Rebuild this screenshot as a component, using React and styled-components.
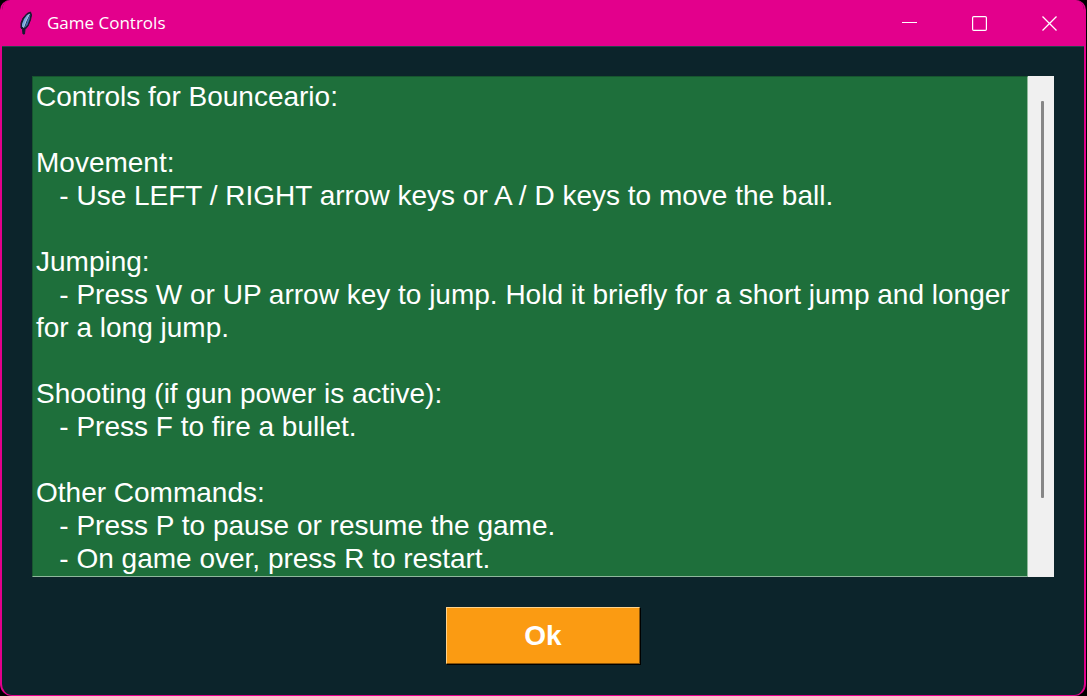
import React from "react";
import styled, { createGlobalStyle } from "styled-components";

const GlobalStyle = createGlobalStyle`
  *, *::before, *::after { box-sizing: border-box; }
  body { margin: 0; background: #000; }
`;

const Window = styled.div`
  display: flex;
  flex-direction: column;
  min-height: 100vh;
  margin-right: 1px;
  border: 2px solid #e3008c;
  border-top: 0;
  border-bottom-width: 1px;
  border-radius: 10px 10px 12px 12px;
  background: #0c242b;
  overflow: hidden;
`;

const TitleBar = styled.header`
  display: flex;
  align-items: center;
  height: 46px;
  padding-left: 16px;
  background: #e3008c;
  color: #fff;
`;

const Title = styled.h1`
  flex: 1;
  margin: 0 0 0 12px;
  font: 400 17px/24px "Open Sans", "Noto Sans", sans-serif;
`;

const WindowButton = styled.button`
  display: flex;
  align-items: center;
  justify-content: center;
  width: 70px;
  height: 46px;
  padding: 0;
  border: 0;
  background: transparent;
  color: inherit;
`;

const Body = styled.main`
  display: flex;
  flex: 1;
  flex-direction: column;
  align-items: center;
  gap: 30px;
  padding: 29px 30px 30px;
  border-top: 1px solid #25454a;
`;

const TextPanel = styled.div`
  display: flex;
  flex: 1;
  align-self: stretch;
  min-height: 200px;
`;

const ControlsText = styled.textarea`
  flex: 1;
  min-width: 0;
  padding: 3px 3px 0;
  border: 1px solid;
  border-color: #17552f #8fb89c #8fb89c #17552f;
  border-radius: 0;
  outline: 0;
  resize: none;
  scrollbar-width: none;
  background: #1e6f3b;
  color: #fff;
  font: 400 28px/33px "Liberation Sans", Arial, sans-serif;
`;

const ScrollTrack = styled.div`
  display: flex;
  justify-content: center;
  width: 26px;
  padding: 25px 0 25px 2px;
  background: #f0f0f0;
`;

const ScrollThumb = styled.div`
  width: 3px;
  height: 88%;
  border-radius: 1px;
  background: #868686;
`;

const OkButton = styled.button`
  width: 194px;
  height: 57px;
  margin-bottom: 1px;
  padding: 0;
  border: 1px solid;
  border-color: #ffd28c #8a5408 #8a5408 #ffd28c;
  border-radius: 0;
  box-shadow: 1px 1px 0 #000;
  background: #fb9b12;
  color: #fff;
  font: 700 28px/32px "Liberation Sans", Arial, sans-serif;
`;

const controls = `Controls for Bounceario:

Movement:
   - Use LEFT / RIGHT arrow keys or A / D keys to move the ball.

Jumping:
   - Press W or UP arrow key to jump. Hold it briefly for a short jump and longer for a long jump.

Shooting (if gun power is active):
   - Press F to fire a bullet.

Other Commands:
   - Press P to pause or resume the game.
   - On game over, press R to restart.`;

const Feather = () => (
  <svg width="17" height="26" viewBox="0 0 17 26" aria-hidden="true">
    <path d="M12.5 2 L9 3.5 L5 8 L3 13 L3 18 L4.5 19.5 L5 24 L6.5 24 L7 19.5 L10 16 L12.5 10 L13.5 5 Z" fill="#171a30" stroke="#171a30" strokeLinejoin="round" />
    <path d="M12 3.5 L9 5 L6 9 L4 14 L4 17 L6 17 L8.5 11 Z" fill="#76a5dc" />
    <path d="M12.5 4 L9.5 10 L6.5 18 L9.5 15 L11.5 9.5 Z" fill="#3f6eb2" />
    <path d="M11.5 4 L8 11 L5.5 18" fill="none" stroke="#b9d2ec" strokeWidth=".8" />
  </svg>
);

const Minimize = () => (
  <svg width="15" height="15" viewBox="0 0 15 15" shapeRendering="crispEdges" aria-hidden="true">
    <path d="M0 6.5h15" stroke="currentColor" />
  </svg>
);

const Maximize = () => (
  <svg width="15" height="15" viewBox="0 0 15 15" aria-hidden="true">
    <rect x=".6" y=".6" width="13.8" height="13.8" rx="1.2" fill="none" stroke="currentColor" strokeWidth="1.2" />
  </svg>
);

const Close = () => (
  <svg width="15" height="15" viewBox="0 0 15 15" aria-hidden="true">
    <path d="M.5 .5l14 14M14.5 .5l-14 14" stroke="currentColor" strokeWidth="1.3" />
  </svg>
);

export default function App() {
  return (
    <>
      <GlobalStyle />
      <Window>
        <TitleBar>
          <Feather />
          <Title>Game Controls</Title>
          <WindowButton aria-label="Minimize"><Minimize /></WindowButton>
          <WindowButton aria-label="Maximize"><Maximize /></WindowButton>
          <WindowButton aria-label="Close"><Close /></WindowButton>
        </TitleBar>
        <Body>
          <TextPanel>
            <ControlsText aria-label="Game controls" readOnly spellCheck={false} value={controls} />
            <ScrollTrack aria-hidden="true"><ScrollThumb /></ScrollTrack>
          </TextPanel>
          <OkButton type="button">Ok</OkButton>
        </Body>
      </Window>
    </>
  );
}
